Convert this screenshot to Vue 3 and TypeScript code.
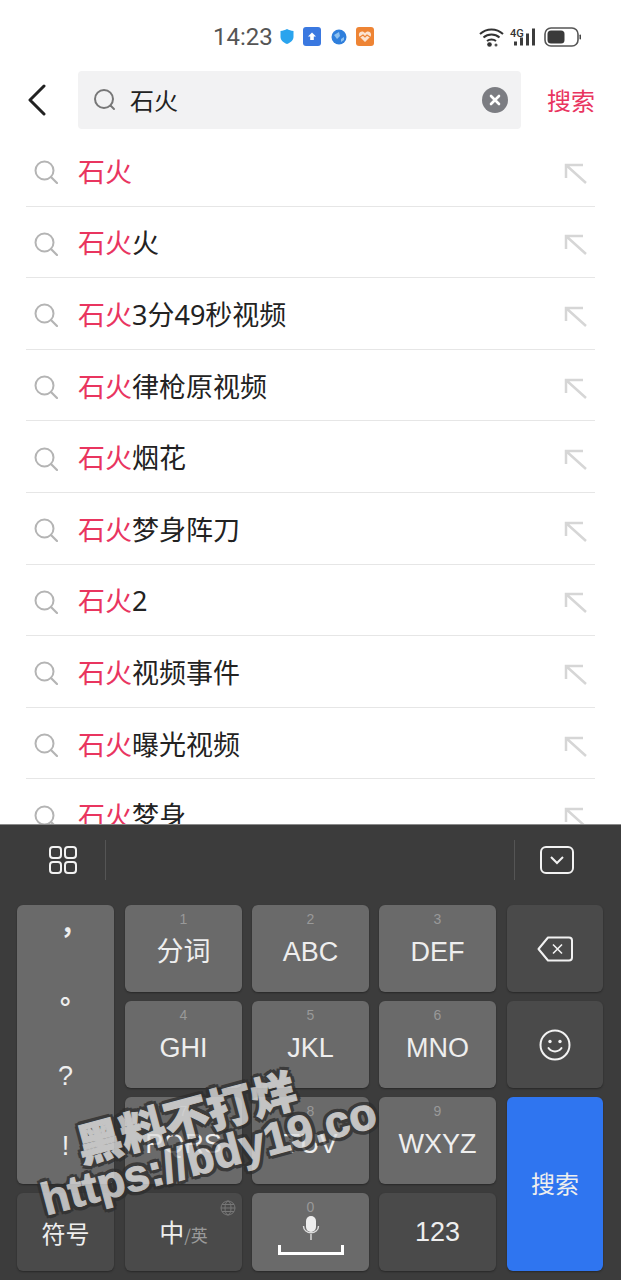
<script setup lang="ts">
interface Row { hit: string; rest: string }
interface Key { num: string; label: string }
const rows: Row[] = [
  { hit: '石火', rest: '' },
  { hit: '石火', rest: '火' },
  { hit: '石火', rest: '3分49秒视频' },
  { hit: '石火', rest: '律枪原视频' },
  { hit: '石火', rest: '烟花' },
  { hit: '石火', rest: '梦身阵刀' },
  { hit: '石火', rest: '2' },
  { hit: '石火', rest: '视频事件' },
  { hit: '石火', rest: '曝光视频' },
  { hit: '石火', rest: '梦身' },
]
const row1: Key[] = [
  { num: '1', label: '分词' },
  { num: '2', label: 'ABC' },
  { num: '3', label: 'DEF' },
]
const row2: Key[] = [
  { num: '4', label: 'GHI' },
  { num: '5', label: 'JKL' },
  { num: '6', label: 'MNO' },
]
const row3: Key[] = [
  { num: '7', label: 'PQRS' },
  { num: '8', label: 'TUV' },
  { num: '9', label: 'WXYZ' },
]
const punct: string[] = ['，', '。', '?', '!']
</script>

<template>
  <div class="page">
    <div class="status">
      <div class="status-mid">
        <span class="time">14:23</span>
        <svg class="si" width="16" height="17" viewBox="0 0 16 17"><path d="M8 1c2 1.2 4 1.8 6.5 2v6c0 3-3 5.700-6.500 7C4.500 14.700 1.500 12 1.500 9V3C4 2.800 6 2.200 8 1z" fill="#2aa4ee"/></svg>
        <svg class="si" width="18" height="19" viewBox="0 0 18 19"><rect width="18" height="19" rx="3" fill="#3a78e0"/><path d="M9 5.500l4 4h-2.200v3.500H7.200V9.500H5z" fill="#fff"/></svg>
        <svg class="si" width="16" height="16" viewBox="0 0 16 16"><circle cx="8" cy="8" r="7.500" fill="#2f7fdc"/><path d="M3 6l5-3 1 4-3 3zM10 10l3-2v3l-3 2z" fill="#8cc0f0"/></svg>
        <svg class="si" width="18" height="19" viewBox="0 0 18 19"><rect width="18" height="19" rx="3" fill="#ee8434"/><path d="M9 15L3.500 9.500C2 7.500 3.500 4.500 6 4.500c1.300 0 2.300.6 3 1.500.7-.9 1.700-1.500 3-1.500 2.500 0 4 3 2.500 5z" fill="#fbe3d0"/><path d="M4 10l3-2 2 2 2-2 3 2" fill="none" stroke="#ee8434" stroke-width="1.200"/></svg>
      </div>
      <div class="status-right">
        <svg width="25" height="20" viewBox="0 0 25 20"><g fill="none" stroke="#333" stroke-width="2"><path d="M1 7c6.500-6 16.500-6 23 0"/><path d="M4.500 10.500c4.500-4 11.500-4 16 0"/><path d="M8 14c2.500-2 6.500-2 9 0"/></g><circle cx="10.500" cy="17.500" r="2.300" fill="#333"/><circle cx="17" cy="18" r="1.500" fill="#555"/></svg>
        <div class="sig">
          <span class="g4">4G</span>
          <svg width="26" height="20" viewBox="0 0 26 20"><g fill="#3c3c3c"><rect x="3" y="14.500" width="3" height="4"/><rect x="9" y="10.500" width="3" height="8"/><rect x="15" y="6.500" width="3" height="12"/><rect x="21" y="1.500" width="3" height="17"/></g></svg>
        </div>
        <svg width="37" height="20" viewBox="0 0 37 20"><rect x="1" y="1" width="33" height="18" rx="6" fill="none" stroke="#555" stroke-width="1.600"/><rect x="3.500" y="3.500" width="17" height="13" rx="3.500" fill="#3a3a3a"/><rect x="35.500" y="7.500" width="1.500" height="5" rx=".7" fill="#444"/></svg>
      </div>
    </div>

    <div class="bar">
      <svg class="back" width="20" height="32" viewBox="0 0 20 32"><path d="M17 2L3 16l14 14" fill="none" stroke="#222" stroke-width="3" stroke-linecap="round" stroke-linejoin="round"/></svg>
      <div class="box">
        <svg width="24" height="24" viewBox="0 0 24 24"><circle cx="11" cy="11" r="9" fill="none" stroke="#777" stroke-width="2"/><path d="M17.500 17.500L21 21" stroke="#777" stroke-width="2" stroke-linecap="round"/></svg>
        <span class="q">石火</span>
        <svg class="clear" width="26" height="26" viewBox="0 0 26 26"><circle cx="13" cy="13" r="13" fill="#7c7d82"/><path d="M9 9l8 8M17 9l-8 8" stroke="#fff" stroke-width="2.600" stroke-linecap="round"/></svg>
      </div>
      <span class="go">搜索</span>
    </div>

    <div class="list">
      <div v-for="(r, i) in rows" :key="i" class="row">
        <svg class="lens" width="24" height="24" viewBox="0 0 24 24"><circle cx="10.500" cy="10.500" r="9" fill="none" stroke="#b4b4b4" stroke-width="2"/><path d="M17 17l6 6" stroke="#b4b4b4" stroke-width="2.200" stroke-linecap="round"/></svg>
        <span class="txt"><span class="hit">{{ r.hit }}</span>{{ r.rest }}</span>
        <svg class="fill" width="24" height="21" viewBox="0 0 24 21"><path d="M2 15V2h17M2 2l20 18" fill="none" stroke="#d6d6d6" stroke-width="2.500"/></svg>
      </div>
    </div>

    <div class="kb">
      <div class="tools">
        <svg class="tool-a" width="30" height="30" viewBox="0 0 30 30"><g fill="none" stroke="#f2f2f2" stroke-width="2"><rect x="2" y="2" width="11" height="11" rx="3"/><rect x="17" y="2" width="11" height="11" rx="3"/><rect x="2" y="17" width="11" height="11" rx="3"/><rect x="17" y="17" width="11" height="11" rx="3"/></g></svg>
        <i class="vr"></i>
        <i class="grow"></i>
        <i class="vr"></i>
        <svg class="tool-b" width="34" height="28" viewBox="0 0 34 28"><rect x="1" y="1" width="32" height="26" rx="5" fill="none" stroke="#f2f2f2" stroke-width="2"/><path d="M11 11l6 6 6-6" fill="none" stroke="#f2f2f2" stroke-width="2"/></svg>
      </div>
      <div class="keys">
        <div class="key light punct narrow-r"><span v-for="p in punct" :key="p">{{ p }}</span></div>
        <div v-for="k in row1" :key="k.num" class="key light"><span class="n">{{ k.num }}</span><span class="l">{{ k.label }}</span></div>
        <div class="key dark center narrow-l">
          <svg width="36" height="26" viewBox="0 0 36 26"><path d="M11 1.500h21a3 3 0 0 1 3 3v17a3 3 0 0 1-3 3H11L1.500 13z" fill="none" stroke="#f2f2f2" stroke-width="2" stroke-linejoin="round"/><path d="M16 8.500l9 9M25 8.500l-9 9" stroke="#f2f2f2" stroke-width="1.600"/></svg>
        </div>
        <div v-for="k in row2" :key="k.num" class="key light"><span class="n">{{ k.num }}</span><span class="l">{{ k.label }}</span></div>
        <div class="key dark center narrow-l">
          <svg width="32" height="32" viewBox="0 0 32 32"><circle cx="16" cy="16" r="14.500" fill="none" stroke="#f2f2f2" stroke-width="2"/><circle cx="11" cy="12.500" r="1.700" fill="#f2f2f2"/><circle cx="21" cy="12.500" r="1.700" fill="#f2f2f2"/><path d="M9.500 19c3 4.500 10 4.500 13 0" fill="none" stroke="#f2f2f2" stroke-width="2" stroke-linecap="round"/></svg>
        </div>
        <div v-for="k in row3" :key="k.num" class="key light"><span class="n">{{ k.num }}</span><span class="l">{{ k.label }}</span></div>
        <div class="key blue center narrow-l">搜索</div>
        <div class="key dark center sym narrow-r">符号</div>
        <div class="key dark center lang">
          <svg class="globe" width="16" height="16" viewBox="0 0 16 16"><g fill="none" stroke="#777" stroke-width="1"><circle cx="8" cy="8" r="7"/><ellipse cx="8" cy="8" rx="3" ry="7"/><path d="M1 8h14M2 4.500h12M2 11.500h12"/></g></svg>
          <span class="zh">中</span><span class="en">/英</span>
        </div>
        <div class="key light space">
          <span class="n zero">0</span>
          <svg width="18" height="24" viewBox="0 0 18 24"><rect x="4" y="0" width="10" height="16" rx="5" fill="#eee"/><path d="M1.500 10c0 9 15 9 15 0M9 18v6" fill="none" stroke="#ddd" stroke-width="1.400"/></svg>
          <svg class="bracket" width="66" height="10" viewBox="0 0 66 10"><path d="M1.500 0v8.500h63V0" fill="none" stroke="#fff" stroke-width="3"/></svg>
        </div>
        <div class="key dark center num">123</div>
      </div>
    </div>

    <div class="mark mark-a">黑料不打烊</div>
    <div class="mark mark-b">https://bdy19.co</div>
  </div>
</template>

<style>
html, body { margin: 0; padding: 0; background: #fff; }
</style>

<style scoped>
.page {
  position: relative;
  width: 621px;
  height: 1280px;
  overflow: hidden;
  background: #fff;
  display: flex;
  flex-direction: column;
  font-family: "Liberation Sans", "Noto Sans CJK SC", sans-serif;
}
.status {
  height: 71px;
  flex: none;
  display: flex;
  align-items: center;
  padding-left: 213px;
  padding-right: 40px;
  box-sizing: border-box;
}
.status-mid { display: flex; align-items: center; padding-top: 2px; }
.time { font-family: Roboto, sans-serif; font-size: 24px; font-weight: 400; color: #555; width: 66px; line-height: 1; }
.si { margin-right: 9px; flex: none; }
.si:nth-child(2) { margin-right: 8px; }
.si:nth-child(3) { margin-right: 10px; }
.status-right { margin-left: auto; display: flex; align-items: center; gap: 7px; padding-top: 2px; }
.sig { position: relative; width: 26px; height: 20px; }
.sig svg { display: block; }
.g4 { position: absolute; left: -1px; top: 1px; font-family: Roboto, sans-serif; font-size: 11px; font-weight: 500; color: #333; line-height: 1; }
.bar {
  height: 58px;
  flex: none;
  display: flex;
  align-items: center;
  padding-left: 27px;
}
.back { flex: none; margin-right: 31px; margin-top: -1px; }
.box {
  width: 443px;
  height: 58px;
  background: #f2f2f3;
  border-radius: 4px;
  display: flex;
  align-items: center;
  padding: 0 13px 0 15px;
  box-sizing: border-box;
}
.q { font-size: 24px; color: #222; margin-left: 13px; font-family: "Noto Sans CJK SC", sans-serif; line-height: 1; }
.clear { margin-left: auto; }
.go { margin-left: 26px; font-size: 24px; color: #e9355f; font-family: "Noto Sans CJK SC", sans-serif; line-height: 1; }
.list { flex: 1; overflow: hidden; padding-top: 6px; min-height: 0; }
.row {
  height: 71.600px;
  box-sizing: border-box;
  margin: 0 26px;
  border-bottom: 1px solid #e6e6e6;
  display: flex;
  align-items: center;
  padding-left: 8px;
  padding-top: 2px;
}
.lens { flex: none; margin-top: 2px; }
.txt { margin-left: 20px; font-family: "Noto Sans", "Noto Sans CJK SC", sans-serif; font-size: 27px; color: #222; line-height: 1; white-space: nowrap; }
.hit { color: #e9355f; }
.fill { margin-left: auto; margin-right: 7px; margin-top: 4px; }
.kb {
  flex: none;
  height: 456px;
  background: #3c3c3c;
  border-top: 1px solid #8a8a8a;
  box-sizing: border-box;
}
.tools { height: 70px; margin-bottom: 10px; display: flex; align-items: center; }
.tool-a { margin-left: 48px; margin-right: 27px; }
.vr { width: 1px; height: 40px; background: #555; }
.grow { flex: 1; }
.tool-b { margin-left: 25px; margin-right: 47px; }
.keys {
  display: grid;
  margin-left: 17px;
  grid-template-columns: 98px 117px 117px 117px 97px;
  grid-template-rows: 87px 87px 87px 78px;
  column-gap: 10px;
  row-gap: 9px;
}
.key {
  border-radius: 6px;
  color: #eeeeee;
  box-shadow: 0 1px 2px rgba(0, 0, 0, 0.35);
  position: relative;
}
.narrow-r { margin-right: 1px; }
.narrow-l { margin-left: 1px; }
.light { background: #6a6a6a; display: flex; flex-direction: column; align-items: center; }
.dark { background: #4a4a4a; }
.blue { background: #2f75f0; grid-column: 5; grid-row: 3 / 5; font-size: 24px; padding-bottom: 4px; box-sizing: border-box; font-family: "Noto Sans CJK SC", sans-serif; }
.center { display: flex; align-items: center; justify-content: center; }
.punct {
  grid-row: 1 / 4;
  justify-content: flex-start;
  font-size: 27px;
  padding-top: 0;
  box-sizing: border-box;
  overflow: hidden;
}
.punct span { height: 70px; line-height: 70px; margin-top: -4px; margin-bottom: 4px; }
.punct span:nth-child(-n+2) { transform: translate(8px, -11px); font-weight: 700; }
.n { font-size: 14px; color: #999; line-height: 16px; margin-top: 6px; }
.l { font-size: 27px; line-height: 32px; margin-top: 9px; }
.sym { font-size: 24px; font-family: "Noto Sans CJK SC", sans-serif; }
.lang { align-items: baseline; padding-top: 22px; box-sizing: border-box; }
.globe { position: absolute; top: 7px; right: 6px; }
.zh { font-size: 25px; font-family: "Noto Sans CJK SC", sans-serif; line-height: 32px; }
.en { font-size: 17px; color: #9a9a9a; font-family: "Noto Sans CJK SC", sans-serif; }
.space { justify-content: flex-start; }
.zero { margin-top: 6px; margin-bottom: 1px; }
.bracket { margin-top: 5px; }
.num { font-size: 27px; }
.mark {
  position: absolute;
  font-family: "Liberation Sans", "Noto Sans CJK SC", sans-serif;
  font-weight: 700;
  color: #dedede;
  opacity: 0.78;
  -webkit-text-stroke: 1px #dedede;
  text-shadow:
    4px 0 0 #2e2e2e, -4px 0 0 #2e2e2e,
    0 4px 0 #2e2e2e, 0 -4px 0 #2e2e2e,
    3px 3px 0 #2e2e2e, -3px 3px 0 #2e2e2e,
    3px -3px 0 #2e2e2e, -3px -3px 0 #2e2e2e;
  white-space: nowrap;
  line-height: 1;
  transform-origin: left center;
}
.mark-a { font-size: 45px; left: 77px; top: 1122px; transform: rotate(-15deg); font-family: "Noto Sans CJK SC", sans-serif; font-weight: 900; }
.mark-b { font-size: 45px; left: 42px; top: 1178px; transform: rotate(-15deg); }
</style>
